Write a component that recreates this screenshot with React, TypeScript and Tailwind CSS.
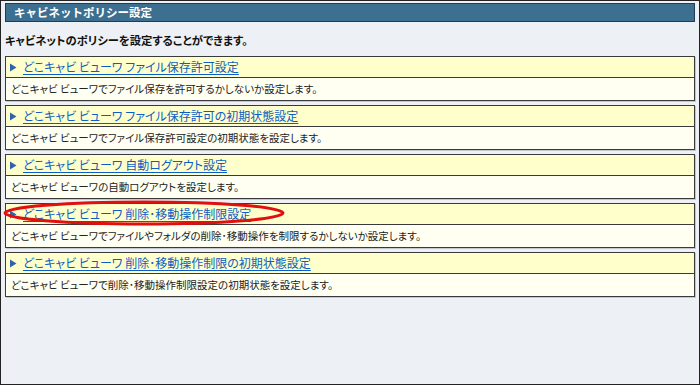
const items = [
  {
    title: 'どこキャビ ビューワ ファイル保存許可設定',
    desc: 'どこキャビ ビューワでファイル保存を許可するかしないか設定します。',
  },
  {
    title: 'どこキャビ ビューワ ファイル保存許可の初期状態設定',
    desc: 'どこキャビ ビューワでファイル保存許可設定の初期状態を設定します。',
  },
  {
    title: 'どこキャビ ビューワ 自動ログアウト設定',
    desc: 'どこキャビ ビューワの自動ログアウトを設定します。',
  },
  {
    title: 'どこキャビ ビューワ 削除･移動操作制限設定',
    desc: 'どこキャビ ビューワでファイルやフォルダの削除･移動操作を制限するかしないか設定します。',
    marked: true,
  },
  {
    title: 'どこキャビ ビューワ 削除･移動操作制限の初期状態設定',
    desc: 'どこキャビ ビューワで削除･移動操作制限設定の初期状態を設定します。',
  },
];

const Arrow = () => (
  <svg width="8" height="9" viewBox="0 0 8 9" className="shrink-0">
    <polygon points="1,0.5 7.5,4.5 1,8.5" fill="#2f63ad" />
  </svg>
);

const PolicyCard = ({ title, desc, marked }: { title: string; desc: string; marked?: boolean }) => (
  <div className="relative border border-[#3a3a3a] shadow-[1px_1px_0_#c4c8cc]">
    <div className="flex h-[21px] items-center gap-[6px] border-b border-[#3a3a3a] bg-[#ffffcc] pl-[3px]">
      <Arrow />
      <a href="#" className="text-[12px] leading-none text-[#0c5ec4] underline underline-offset-2">
        {title}
      </a>
    </div>
    <div className="flex h-[22px] items-center bg-[#fffff2] pl-[5px] text-[10.5px] leading-none text-[#222]">
      {desc}
    </div>
    {marked && (
      <svg
        width="284"
        height="27"
        viewBox="0 0 284 27"
        className="pointer-events-none absolute left-[-3px] top-[-4px]"
      >
        <ellipse cx="141" cy="13" rx="139" ry="11" fill="none" stroke="#e01010" strokeWidth="3" />
      </svg>
    )}
  </div>
);

export default function App() {
  return (
    <div
      className="h-[385px] w-[700px] border border-[#222] bg-[#edf1f5] px-[4px] pt-[2px] [font-feature-settings:'palt']"
      style={{ fontFamily: '"Noto Sans CJK JP", "Noto Sans", sans-serif' }}
    >
      <div className="flex h-[19px] items-center border border-[#1f3d55] bg-[#3c6f90] pl-[8px] text-[11.5px] font-bold leading-none text-white [font-feature-settings:normal]">
        キャビネットポリシー設定
      </div>
      <p className="mt-[11px] mb-[9px] text-[11.3px] font-bold leading-[14px] text-[#111]">
        キャビネットのポリシーを設定することができます。
      </p>
      <div className="flex flex-col gap-[4px]">
        {items.map((item) => (
          <PolicyCard key={item.title} {...item} />
        ))}
      </div>
    </div>
  );
}
